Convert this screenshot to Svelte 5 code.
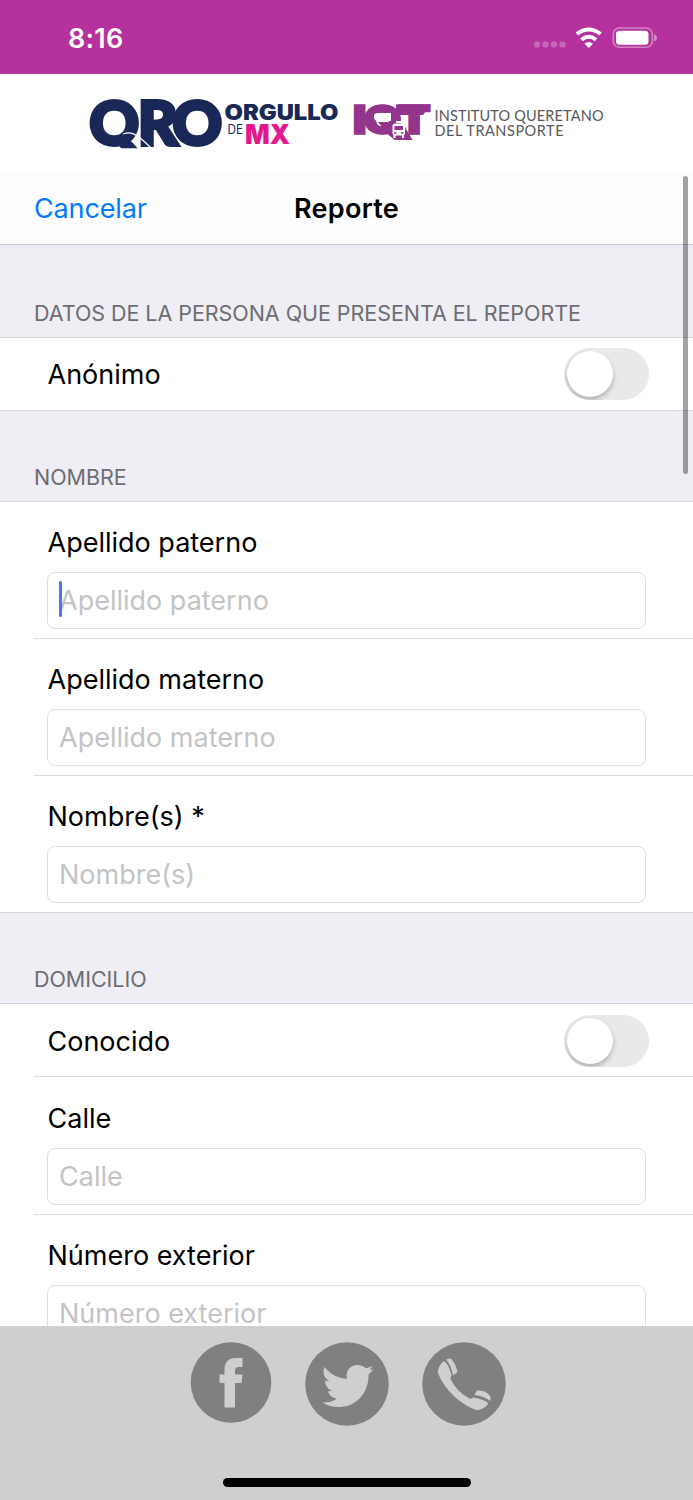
<script lang="ts">
  interface Field {
    label: string;
    type: 'text' | 'switch';
    placeholder?: string;
    focused?: boolean;
  }

  interface Section {
    title: string;
    fields: Field[];
  }

  const sections: Section[] = [
    {
      title: 'Datos de la persona que presenta el reporte',
      fields: [{ label: 'Anónimo', type: 'switch' }]
    },
    {
      title: 'Nombre',
      fields: [
        { label: 'Apellido paterno', type: 'text', placeholder: 'Apellido paterno', focused: true },
        { label: 'Apellido materno', type: 'text', placeholder: 'Apellido materno' },
        { label: 'Nombre(s) *', type: 'text', placeholder: 'Nombre(s)' }
      ]
    },
    {
      title: 'Domicilio',
      fields: [
        { label: 'Conocido', type: 'switch' },
        { label: 'Calle', type: 'text', placeholder: 'Calle' },
        { label: 'Número exterior', type: 'text', placeholder: 'Número exterior' }
      ]
    }
  ];

  let switches = $state<Record<string, boolean>>({ Anónimo: false, Conocido: false });
</script>

<div class="screen">
  <header class="status-bar">
    <span class="time">8:16</span>
    <svg class="status-icons" width="130" height="30" viewBox="0 0 130 30" aria-hidden="true">
      <g fill="#fff" opacity="0.25">
        <rect x="4" y="17.5" width="6" height="6" rx="2" />
        <rect x="12.5" y="17.5" width="6" height="6" rx="2" />
        <rect x="21" y="17.5" width="6" height="6" rx="2" />
        <rect x="29.5" y="17.5" width="6" height="6" rx="2" />
      </g>
      <g fill="none" stroke="#fff" stroke-width="4">
        <path d="M47 10Q58.7 1 70.5 10" />
        <path d="M51.5 15.7Q58.7 9.8 66 15.7" />
      </g>
      <path d="M54.5 19.8Q58.7 16.3 63 19.8L58.7 24Z" fill="#fff" />
      <rect x="83.3" y="4" width="39" height="19.2" rx="6" fill="none" stroke="#fff" stroke-opacity="0.4" stroke-width="1.6" />
      <rect x="86" y="6.7" width="32.5" height="14" rx="3.5" fill="#fff" />
      <path d="M124 10.2Q127 11.2 127 13.7T124 17.2Z" fill="#fff" opacity="0.45" />
    </svg>
  </header>

  <div class="brand">
    <svg width="520" height="60" viewBox="0 0 520 60" role="img" aria-label="Querétaro, Instituto Queretano del Transporte">
      <g class="logo-qro">
        <text class="logo-mark" x="1.5 50 84.5" y="54.5" font-size="61">QRO</text>
        <text x="136.5" y="29.5" font-size="21.5" textLength="114" lengthAdjust="spacingAndGlyphs">ORGULLO</text>
        <path d="M35 44C44 41 48 45 52 48S59 54 63 58" fill="none" stroke="#fff" stroke-width="1.3" />
        <path d="M0 58.2H66V68H0Z" fill="#fff" />
      </g>
      <text class="logo-de" x="139.5" y="43.5" font-size="12.5" textLength="15.5" lengthAdjust="spacingAndGlyphs">DE</text>
      <text class="logo-mx" x="157" y="54" font-size="27" textLength="45" lengthAdjust="spacingAndGlyphs">MX</text>

      <g class="logo-iqt">
        <text x="215 224 251.5" y="44.5" font-size="40" transform="scale(1.23 1)">IQT</text>
        <path d="M308 14.5H343L335 25H308Z" />
        <path d="M300 37H317L324.5 50H307L298 43Z" />
        <path d="M286 26Q286 23 290 23H303V31H290Q286 31 286 27Z" fill="#fff" />
      </g>
      <g>
        <rect x="304.5" y="33.5" width="12.5" height="12" rx="2.5" fill="#fff" />
        <path d="M308 32H314" stroke="#fff" stroke-width="2" />
        <rect x="306.5" y="36" width="8.5" height="4" fill="#93358d" />
        <path d="M306.5 45V48M315 45V48" stroke="#fff" stroke-width="2" />
        <path d="M306 43H308.5M313 43H315.5" stroke="#93358d" stroke-width="1.5" />
      </g>
      <g class="logo-name">
        <text x="346.5" y="31" font-size="14.5" textLength="169">INSTITUTO QUERETANO</text>
        <text x="346.5" y="46" font-size="14.5" textLength="129">DEL TRANSPORTE</text>
      </g>
    </svg>
  </div>

  <nav class="nav-bar">
    <button class="cancel">Cancelar</button>
    <h1>Reporte</h1>
  </nav>

  <main class="form">
    {#each sections as section, i}
      <h2 class:first={i === 0}>{section.title}</h2>
      <div class="group">
        {#each section.fields as field}
          {#if field.type === 'switch'}
            <div class="row switch-row">
              <span class="label">{field.label}</span>
              <button
                class="switch"
                class:on={switches[field.label]}
                role="switch"
                aria-checked={switches[field.label]}
                aria-label={field.label}
                onclick={() => (switches[field.label] = !switches[field.label])}
              >
                <span class="knob"></span>
              </button>
            </div>
          {:else}
            <label class="row text-row">
              <span class="label">{field.label}</span>
              <span class="input-wrap">
                <input type="text" placeholder={field.placeholder} />
                {#if field.focused}
                  <span class="caret"></span>
                {/if}
              </span>
            </label>
          {/if}
        {/each}
      </div>
    {/each}
    <div class="scrollbar"></div>
  </main>

  <footer class="contact-bar">
    <div class="contacts">
      <button aria-label="Facebook">
        <svg width="82" height="84" viewBox="0 0 82 84">
          <circle cx="41" cy="40.5" r="40.3" fill="#808080" />
          <path d="M34.5 65.5V41H29.5V32.5H34.5V28Q34.5 16 46 16H52.5V25H48.5Q45 25 45 29V32.5H52.5L51.5 41H45V65.5Z" fill="#cfcfcf" />
        </svg>
      </button>
      <button aria-label="Twitter">
        <svg width="84" height="84" viewBox="0 0 84 84">
          <circle cx="42" cy="42" r="41.8" fill="#808080" />
          <path d="M19.5 25C25 32 33 36.5 42 36.7C40 28 46 23 52 23C56 23 59 24.5 61 26.5L67.5 24L64.5 28L68.5 27.5L63.5 32.5C64 49 53 65 34 65C28 65 22 63.5 17.5 60.5C23 61 28 59.5 32 56.5C27 56 24 53 23 49.2L27.5 49C22.5 47 20 43 20 38.5L24.5 39.5C19.5 36 17 31 19.5 25Z" fill="#cfcfcf" />
        </svg>
      </button>
      <button aria-label="Teléfono">
        <svg width="84" height="84" viewBox="0 0 84 84">
          <circle cx="42" cy="42" r="41.8" fill="#808080" />
          <g fill="#cfcfcf">
            <path d="M22 19C18 22 15.5 27 16 31C22 47 38 62 54 68C58 68 63 66 66 62L65 60C61 58 56 56 51.5 55.5L48.5 57C40 53 32 45 28.5 36.5L29.5 33C28 27 26 22 22 19Z" />
            <path d="M24 17.5L28 16.5C31 17.5 34.5 24 35.5 30L31 33.5C30 27 28 22 24 17.5Z" />
            <path d="M52.5 53L55 48.5C61 48 67 51 68.5 55V59C64 55.5 59 54 52.5 53Z" />
          </g>
        </svg>
      </button>
    </div>
    <div class="home-indicator"></div>
  </footer>
</div>

<style>
  :global(body) {
    margin: 0;
  }

  .screen {
    display: flex;
    flex-direction: column;
    width: 693px;
    height: 1500px;
    overflow: hidden;
    background: #fff;
    color: #000;
    font-family: Inter, 'Liberation Sans', sans-serif;
    font-size: 27px;
  }

  button {
    padding: 0;
    border: none;
    background: none;
    font: inherit;
    cursor: pointer;
  }

  .status-bar {
    display: flex;
    flex: none;
    align-items: center;
    justify-content: space-between;
    box-sizing: border-box;
    height: 74px;
    padding: 2px 33px 0 68px;
    background: #b5329e;
    color: #fff;
  }

  .time {
    font-size: 27px;
    font-weight: 600;
    letter-spacing: 0.2px;
  }

  .status-icons {
    margin-top: 2px;
  }

  .brand {
    flex: none;
    height: 80px;
    padding: 16px 0 0 88px;
    box-sizing: border-box;
    margin-bottom: 17px;
  }

  .brand svg {
    display: block;
    overflow: visible;
  }

  .logo-qro {
    fill: #192857;
    font-weight: 900;
  }

  .logo-mark {
    font-family: Lato, sans-serif;
    stroke: #192857;
    stroke-width: 4;
  }

  .logo-de {
    fill: #192857;
  }

  .logo-mx {
    fill: #e5178f;
    font-weight: 900;
  }

  .logo-iqt {
    fill: #93358d;
    font-weight: 900;
  }

  .logo-iqt text {
    stroke: #93358d;
    stroke-width: 1.5;
  }

  .logo-name {
    fill: #58585a;
    font-family: Lato, sans-serif;
  }

  .nav-bar {
    position: relative;
    display: grid;
    flex: none;
    grid-template-columns: 1fr auto 1fr;
    align-items: center;
    box-sizing: border-box;
    height: 74px;
    padding: 1px 34px 0;
    border-bottom: 1px solid #c9c9cb;
    background: #fdfdfd;
  }

  .nav-bar::after {
    position: absolute;
    top: 5px;
    right: 5px;
    bottom: -1px;
    width: 5px;
    border-radius: 3px 3px 0 0;
    background: rgba(0, 0, 0, 0.36);
    content: '';
  }

  .cancel {
    justify-self: start;
    color: #007aff;
    letter-spacing: -0.15px;
  }

  h1 {
    margin: 0;
    font-size: 27px;
    font-weight: 600;
    letter-spacing: 0.3px;
  }

  .form {
    position: relative;
    flex: 1;
    min-height: 0;
    overflow: hidden;
    background: #efeef4;
  }

  h2 {
    display: flex;
    align-items: flex-end;
    box-sizing: border-box;
    height: 90px;
    margin: 0;
    padding: 0 34px 11px;
    color: #6d6d72;
    font-size: 21.5px;
    font-weight: 400;
    letter-spacing: -0.05px;
    line-height: 26px;
    text-transform: uppercase;
  }

  h2.first {
    height: 92px;
  }

  .group {
    border: solid #d7d6db;
    border-width: 1px 0;
    background: #fff;
  }

  .row {
    position: relative;
    display: flex;
    box-sizing: border-box;
  }

  /* separators start at the left inset and run to the right edge */
  .row:not(:last-child)::after {
    position: absolute;
    right: 0;
    bottom: 0;
    left: 34px;
    height: 1px;
    background: #dddcdf;
    content: '';
  }

  .switch-row {
    align-items: center;
    justify-content: space-between;
    height: 72px;
    padding: 0 44px 0 47.5px;
  }

  .switch-row:not(:last-child) {
    height: 73px;
  }

  .text-row {
    flex-direction: column;
    height: 137px;
    padding: 24px 47px 0;
  }

  .text-row:last-child {
    height: 136px;
  }

  .switch-row + .text-row {
    height: 138px;
    padding-top: 25px;
  }

  .label {
    line-height: 34px;
  }

  .switch-row .label {
    padding-top: 2px;
  }

  .text-row .label {
    padding-left: 0.5px;
  }

  .switch {
    width: 85px;
    height: 52px;
    padding: 3px;
    border-radius: 26px;
    background: #e9e9ea;
    overflow: hidden;
  }

  .switch.on {
    background: #34c759;
  }

  .knob {
    display: block;
    width: 46px;
    height: 46px;
    border-radius: 50%;
    background: #fff;
    box-shadow: 0 3px 5px rgba(0, 0, 0, 0.25);
  }

  .switch.on .knob {
    margin-left: auto;
  }

  .input-wrap {
    position: relative;
    display: block;
    margin-top: 12px;
  }

  input {
    display: block;
    box-sizing: border-box;
    width: 599px;
    height: 57px;
    padding: 0 11px 1px;
    border: 1px solid #dfdfe0;
    border-radius: 8px;
    background: #fff;
    color: #000;
    font: inherit;
    outline: none;
  }

  input::placeholder {
    color: #c4c4c6;
    opacity: 1;
  }

  .caret {
    position: absolute;
    top: 9px;
    left: 12px;
    width: 3px;
    height: 36px;
    border-radius: 2px;
    background: #4a77f0;
  }

  .scrollbar {
    position: absolute;
    top: 0;
    right: 5px;
    width: 5px;
    height: 229px;
    border-radius: 0 0 3px 3px;
    background: rgba(0, 0, 0, 0.36);
  }

  .contact-bar {
    display: flex;
    flex: none;
    flex-direction: column;
    align-items: center;
    justify-content: space-between;
    box-sizing: border-box;
    height: 174px;
    padding: 16px 0 13px;
    background: #cfcfcf;
  }

  .contacts {
    display: flex;
    gap: 33px;
    margin-left: 2px;
  }

  .contacts svg {
    display: block;
  }

  .home-indicator {
    width: 248px;
    height: 9px;
    border-radius: 5px;
    background: #000;
  }
</style>
